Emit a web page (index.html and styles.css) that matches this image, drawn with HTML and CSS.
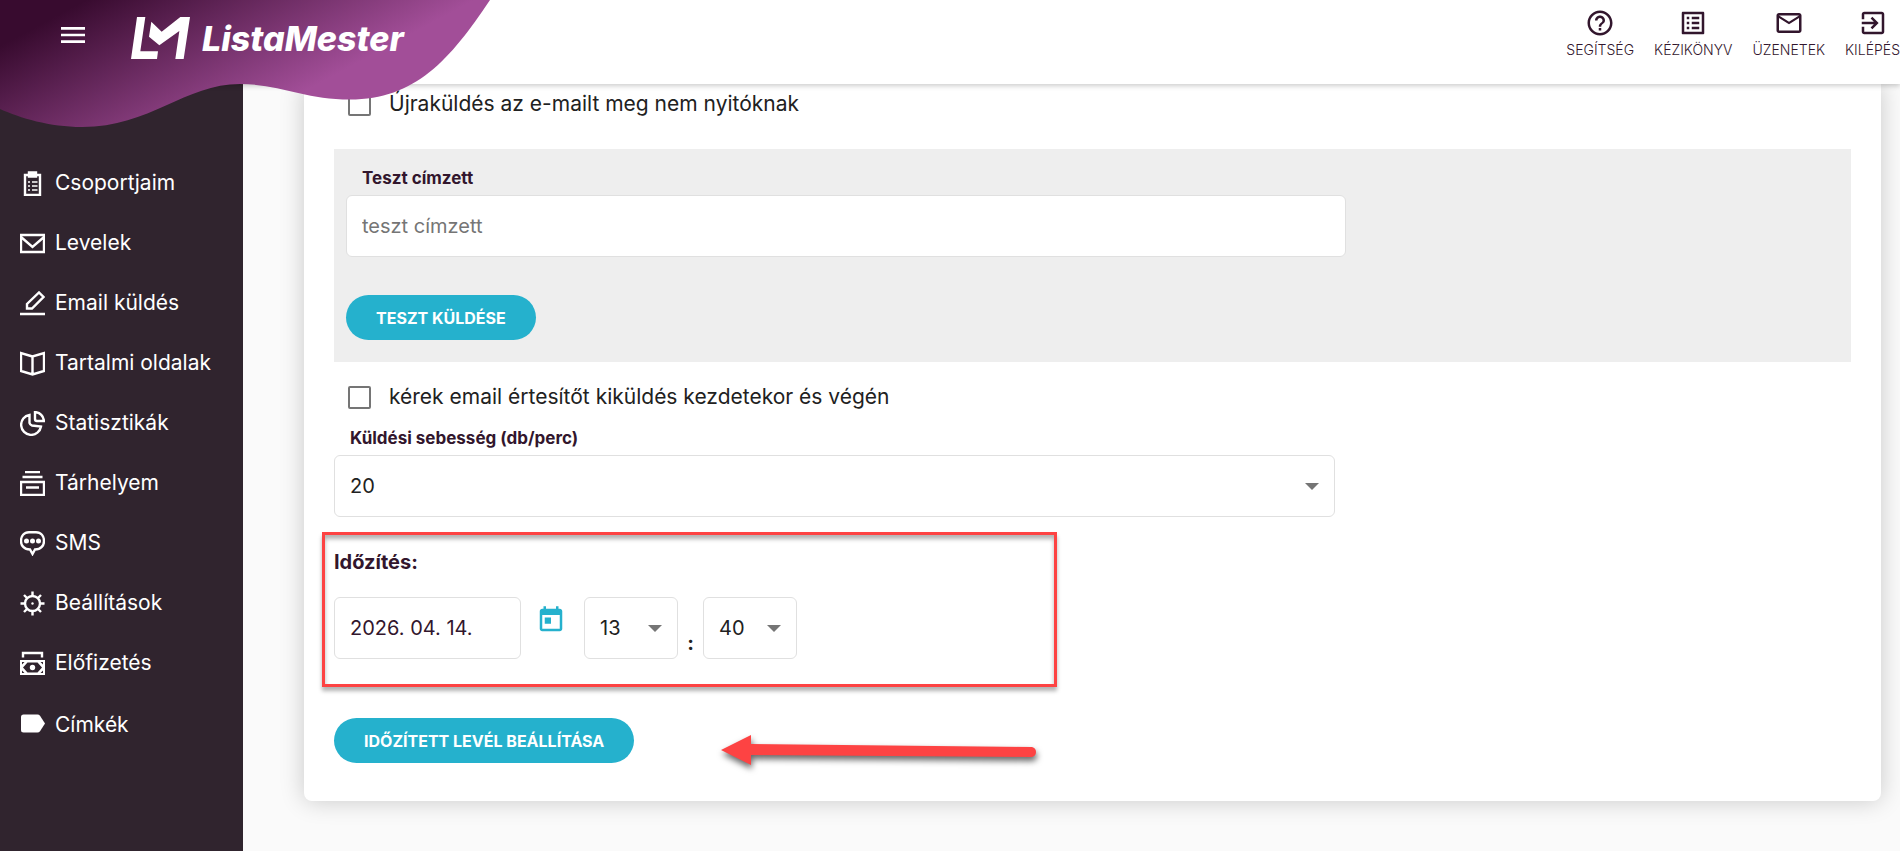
FILE: index.html
```html
<!DOCTYPE html>
<html lang="hu">
  <head>
    <meta charset="UTF-8" />
    <meta name="viewport" content="width=device-width, initial-scale=1.0" />
    <title>ListaMester</title>
    <link rel="stylesheet" href="styles.css">
  </head>
  <body>
    <header class="topbar">
      <!-- Lila hullám a logó mögött -->
      <svg class="wave" viewBox="0 0 490 128" aria-hidden="true">
        <defs>
          <linearGradient id="wave-fill" gradientUnits="userSpaceOnUse" x1="19" y1="36" x2="106" y2="198">
            <stop offset="0" stop-color="#380b2f" />
            <stop offset="1" stop-color="#a24e98" />
          </linearGradient>
        </defs>
        <path fill="url(#wave-fill)" d="M0 0H490C450 60 415 99.5 350 99.5C305 99.5 280 84 240 84C185 84 150 127 82 127C50 127 20 118 0 109Z" />
      </svg>
      <div class="brand">
        <button class="menu-button" type="button" aria-label="Menü">
          <svg viewBox="0 0 24 24"><path d="M3 18h18v-2H3v2zm0-5h18v-2H3v2zm0-7v2h18V6H3z" /></svg>
        </button>
        <a class="logo" href="#">
          <svg viewBox="392 51 177 126" aria-hidden="true">
            <path d="M410 51H435L420 154H473L470 177H392ZM453 65L484 95L540 51H569L550 177H525L537 93L477 136L446 110Z" />
          </svg>
          <span>ListaMester</span>
        </a>
      </div>
      <nav class="top-links">
        <a href="#">
          <svg viewBox="0 0 24 24"><path d="M11 18h2v-2h-2v2zm1-16C6.48 2 2 6.48 2 12s4.48 10 10 10 10-4.48 10-10S17.52 2 12 2zm0 18c-4.41 0-8-3.59-8-8s3.59-8 8-8 8 3.59 8 8-3.59 8-8 8zm0-14c-2.21 0-4 1.79-4 4h2c0-1.1.9-2 2-2s2 .9 2 2c0 2-3 1.75-3 5h2c0-2.25 3-2.5 3-5 0-2.21-1.79-4-4-4z" /></svg>
          SEGÍTSÉG
        </a>
        <a href="#">
          <svg viewBox="0 0 24 24"><path d="M11 7h6v2h-6zm0 4h6v2h-6zm0 4h6v2h-6zM7 7h2v2H7zm0 4h2v2H7zm0 4h2v2H7zM20.1 3H3.9c-.5 0-.9.4-.9.9v16.2c0 .4.4.9.9.9h16.2c.4 0 .9-.5.9-.9V3.9c0-.5-.5-.9-.9-.9zM19 19H5V5h14v14z" /></svg>
          KÉZIKÖNYV
        </a>
        <a href="#">
          <svg viewBox="0 0 24 24"><path d="M22 6c0-1.1-.9-2-2-2H4c-1.1 0-2 .9-2 2v12c0 1.1.9 2 2 2h16c1.1 0 2-.9 2-2V6zm-2 0l-8 5-8-5h16zm0 12H4V8l8 5 8-5v10z" /></svg>
          ÜZENETEK
        </a>
        <a href="#">
          <svg viewBox="0 0 24 24"><path d="M10.09 15.59L11.5 17l5-5-5-5-1.41 1.41L12.67 11H3v2h9.67l-2.58 2.59zM19 3H5c-1.11 0-2 .9-2 2v4h2V5h14v14H5v-4H3v4c0 1.1.89 2 2 2h14c1.1 0 2-.9 2-2V5c0-1.1-.9-2-2-2z" /></svg>
          KILÉPÉS
        </a>
      </nav>
    </header>

    <div class="layout">
      <!-- Oldalsó menü -->
      <nav class="sidebar">
        <a href="#">
          <svg viewBox="0 0 25 25" class="line"><path d="M5 4H20V24H5ZM9 1.5H16V5.5H9Z" /><path class="thin" d="M8 11H10M12 11H17.5M8 15H10M12 15H17.5M8 19H10M12 19H17.5" /></svg>
          Csoportjaim
        </a>
        <a href="#">
          <svg viewBox="0 0 25 25" class="line"><path d="M1 4H24V21H1ZM1 6L12.5 16L24 6" /></svg>
          Levelek
        </a>
        <a href="#">
          <svg viewBox="0 0 25 25" class="line"><path d="M0 23H25M7 17.5V13L19 1.500L23.500 6L12 17.500Z" /></svg>
          Email küldés
        </a>
        <a href="#">
          <svg viewBox="0 0 25 25" class="line"><path d="M12.5 5.5L1 2V20L12.5 23.5L24 20V2ZM12.5 5.5V23.5" /></svg>
          Tartalmi oldalak
        </a>
        <a href="#">
          <svg viewBox="0 0 25 25" class="line"><path d="M9.5 4A10 10 0 1 0 21 15.5L12 14.5Q10 14 9.5 12ZM15 1Q23 2 24 10H17Q15 10 15 8Z" /></svg>
          Statisztikák
        </a>
        <a href="#">
          <svg viewBox="0 0 25 25" class="line"><path d="M5 1H20M2.5 6H22.5M1 11H24V24H1ZM6 16.5H19" /></svg>
          Tárhelyem
        </a>
        <a href="#">
          <svg viewBox="0 0 25 25" class="line"><path d="M12.5 23L10 18.5C4 18.5 1 14.5 1 10C1 5 4 1.2 9 1.2H16C21 1.2 24 5 24 10C24 14.5 21 18.5 15 18.5Z" /><path class="solid" d="M4 10a2.500 2.500 0 1 0 5 0a2.500 2.500 0 1 0-5 0M10 10a2.500 2.500 0 1 0 5 0a2.500 2.500 0 1 0-5 0M16 10a2.500 2.500 0 1 0 5 0a2.500 2.500 0 1 0-5 0" /></svg>
          SMS
        </a>
        <a href="#">
          <svg viewBox="0 0 25 25" class="line"><circle cx="12.5" cy="12.5" r="7.5" /><path d="M12.5 0.5V5M12.5 20V24.5M0.5 12.5H5M20 12.5H24.5M4 4L7 7M18 18L21 21M4 21L7 18M18 7L21 4" /><circle class="solid" cx="12.5" cy="12.5" r="1.2" /></svg>
          Beállítások
        </a>
        <a href="#">
          <svg viewBox="0 0 25 25" class="line"><path d="M3 6.5V2H22V6.5" /><path class="solid" fill-rule="evenodd" d="M0 9H25V24H0ZM7.5 11.5L3 16.5L7.5 21.5H17.5L22 16.5L17.5 11.5Z" /><circle class="solid" cx="12.5" cy="16.5" r="2.7" /><path class="hole" d="M2 11H4.5L2 13.5ZM23 11H20.5L23 13.5ZM2 22H4.5L2 19.5ZM23 22H20.5L23 19.5Z" /></svg>
          Előfizetés
        </a>
        <a href="#">
          <svg viewBox="0 0 25 25" class="line"><path class="solid" d="M3.5 1.500H17.500Q19 1.500 20 2.700L25 10.500L20 18.300Q19 19.500 17.500 19.500H3.500Q1 19.500 1 17V4Q1 1.500 3.500 1.500Z" /></svg>
          Címkék
        </a>
      </nav>

      <main class="content">
        <form class="card">
          <label class="check">
            <input type="checkbox" />
            Újraküldés az e-mailt meg nem nyitóknak
          </label>

          <!-- Teszt levél -->
          <section class="test-box">
            <label class="field-label" for="test-recipient">Teszt címzett</label>
            <input class="control" id="test-recipient" type="text" placeholder="teszt címzett" />
            <button class="button" type="button">TESZT KÜLDÉSE</button>
          </section>

          <label class="check notify">
            <input type="checkbox" />
            kérek email értesítőt kiküldés kezdetekor és végén
          </label>

          <label class="field-label" for="speed">Küldési sebesség (db/perc)</label>
          <div class="select speed">
            <select class="control" id="speed">
              <option>20</option>
            </select>
          </div>

          <!-- Időzítés -->
          <section class="schedule">
            <h2>Időzítés:</h2>
            <div class="schedule-row">
              <input class="control date" type="text" value="2026. 04. 14." aria-label="Dátum" />
              <button class="calendar" type="button" aria-label="Naptár">
                <svg viewBox="0 0 24 24"><path d="M19 3h-1V1h-2v2H8V1H6v2H5c-1.11 0-1.99.9-1.99 2L3 19c0 1.1.89 2 2 2h14c1.1 0 2-.9 2-2V5c0-1.1-.9-2-2-2zm0 16H5V8h14v11zM7 10h5v5H7z" /></svg>
              </button>
              <div class="select time">
                <select class="control" aria-label="Óra">
                  <option>13</option>
                </select>
              </div>
              <span class="colon">:</span>
              <div class="select time">
                <select class="control" aria-label="Perc">
                  <option>40</option>
                </select>
              </div>
            </div>
          </section>

          <div class="submit-row">
            <button class="button" type="submit">IDŐZÍTETT LEVÉL BEÁLLÍTÁSA</button>
            <svg class="arrow" viewBox="0 0 316 32" aria-hidden="true">
              <path d="M0 16L30 1V10L311 13Q315 14 315 18Q315 22 311 23L30 21V31Z" />
            </svg>
          </div>
        </form>
      </main>
    </div>
  </body>
</html>
```
FILE: styles.css
```css
* {
  box-sizing: border-box;
}
body {
  margin: 0;
  background-color: #fafafa;
  color: #212121;
  font-family: Inter, "Open Sans", sans-serif;
  font-size: 20px;
  line-height: 24px;
}
a {
  color: inherit;
  text-decoration: none;
}
button,
input,
select {
  font: inherit;
}

/* Fejléc */
.topbar {
  position: sticky;
  top: 0;
  z-index: 2;
  display: flex;
  justify-content: space-between;
  height: 84px;
  background-color: #fff;
  box-shadow: 0 2px 5px rgba(0, 0, 0, 0.2);
}
.wave {
  position: absolute;
  left: 0;
  top: 0;
  width: 490px;
}
.brand {
  position: relative;
  display: flex;
  align-items: flex-start;
  gap: 42px;
  padding: 17px 0 0 57px;
}
.menu-button {
  height: 36px;
  padding: 0;
  border: none;
  background: none;
  cursor: pointer;
}
.menu-button svg {
  display: block;
  width: 32px;
  fill: #fff;
}
.logo {
  display: flex;
  gap: 12px;
  color: #fff;
  font-size: 34px;
  font-style: italic;
  font-weight: 800;
  line-height: 44px;
}
.logo svg {
  width: 59px;
  height: 42px;
  fill: #fff;
}
.top-links {
  display: flex;
  gap: 20px;
  padding-top: 8px;
}
.top-links a {
  display: flex;
  flex-direction: column;
  align-items: center;
  color: #32162d;
  font-size: 14px;
  font-weight: 300;
}
.top-links svg {
  width: 30px;
  height: 30px;
  fill: #32162d;
}

.layout {
  display: flex;
  min-height: calc(100vh - 84px);
}

/* Oldalsó menü */
.sidebar {
  flex: none;
  width: 243px;
  padding-top: 69px;
  background-color: #30242e;
  color: #fff;
  font-size: 21px;
}
.sidebar a {
  display: flex;
  align-items: center;
  gap: 10px;
  height: 60px;
  padding-left: 20px;
}
.sidebar a:last-child {
  height: 64px;
}
.sidebar svg {
  width: 25px;
  height: 25px;
}
.line {
  fill: none;
  stroke: #fff;
  stroke-width: 2.4;
}
.thin {
  stroke-width: 1.6;
}
.solid {
  fill: #fff;
  stroke: none;
}
.hole {
  fill: #30242e;
  stroke: none;
}

/* Tartalom */
.content {
  flex: 1;
  padding: 0 19px 50px 61px;
}
.card {
  padding: 5px 30px 35px;
  border-radius: 0 0 8px 8px;
  background-color: #fff;
  box-shadow: 0 0 25px rgba(0, 0, 0, 0.2);
}
.check {
  display: flex;
  align-items: center;
  gap: 18px;
  height: 30px;
  padding-left: 14px;
  font-size: 21px;
}
.check input {
  appearance: none;
  width: 23px;
  height: 23px;
  margin: 0;
  border: 2px solid #757575;
  border-radius: 2px;
}
.test-box {
  margin-top: 30px;
  padding: 17px 12px 22px;
  background-color: #eee;
}
.field-label {
  display: block;
  margin-bottom: 5px;
  padding-left: 16px;
  color: #32162d;
  font-size: 17px;
  font-weight: 700;
}
.control {
  display: block;
  width: 100%;
  height: 62px;
  padding: 0 15px;
  border: 1px solid #e0e0e0;
  border-radius: 6px;
  background-color: #fff;
  color: #212121;
}
.control::placeholder {
  color: #757575;
}
.test-box .control {
  width: 67%;
  margin-bottom: 38px;
}
.button {
  height: 45px;
  padding: 0 30px;
  border: none;
  border-radius: 23px;
  background-color: #25b1cd;
  color: #fff;
  font-size: 16px;
  font-weight: 700;
  cursor: pointer;
}
.notify {
  margin: 20px 0 14px;
}
.select {
  position: relative;
}
.select .control {
  appearance: none;
}
.select::after {
  content: "";
  position: absolute;
  top: 28px;
  right: 16px;
  border: 7px solid transparent;
  border-top-color: #757575;
  border-bottom: none;
  pointer-events: none;
}
.speed {
  width: 66%;
}

/* Időzítés */
.schedule {
  max-width: 735px;
  margin: 15px 0 31px -12px;
  padding: 15px 9px 25px;
  border: 3px solid #fd4343;
  box-shadow: 0 4px 4px rgba(0, 0, 0, 0.3), inset 0 4px 4px rgba(0, 0, 0, 0.3);
}
.schedule h2 {
  margin: 0 0 23px;
  color: #32162d;
  font-size: 20px;
  font-weight: 700;
}
.schedule-row {
  display: flex;
}
.date {
  width: 187px;
  color: #32162d;
}
.calendar {
  align-self: flex-start;
  margin: 8px 18px 0 15px;
  padding: 0;
  border: none;
  background: none;
  cursor: pointer;
}
.calendar svg {
  display: block;
  width: 30px;
  fill: #25b1cd;
}
.time {
  width: 94px;
}
.colon {
  align-self: flex-end;
  width: 25px;
  padding-bottom: 4px;
  text-align: center;
  font-weight: 700;
}
.submit-row {
  display: flex;
  align-items: flex-start;
  gap: 87px;
}
.arrow {
  width: 316px;
  margin-top: 16px;
  overflow: visible;
  fill: #fd4343;
  filter: drop-shadow(1px 4px 3px rgba(0, 0, 0, 0.6));
}
```
